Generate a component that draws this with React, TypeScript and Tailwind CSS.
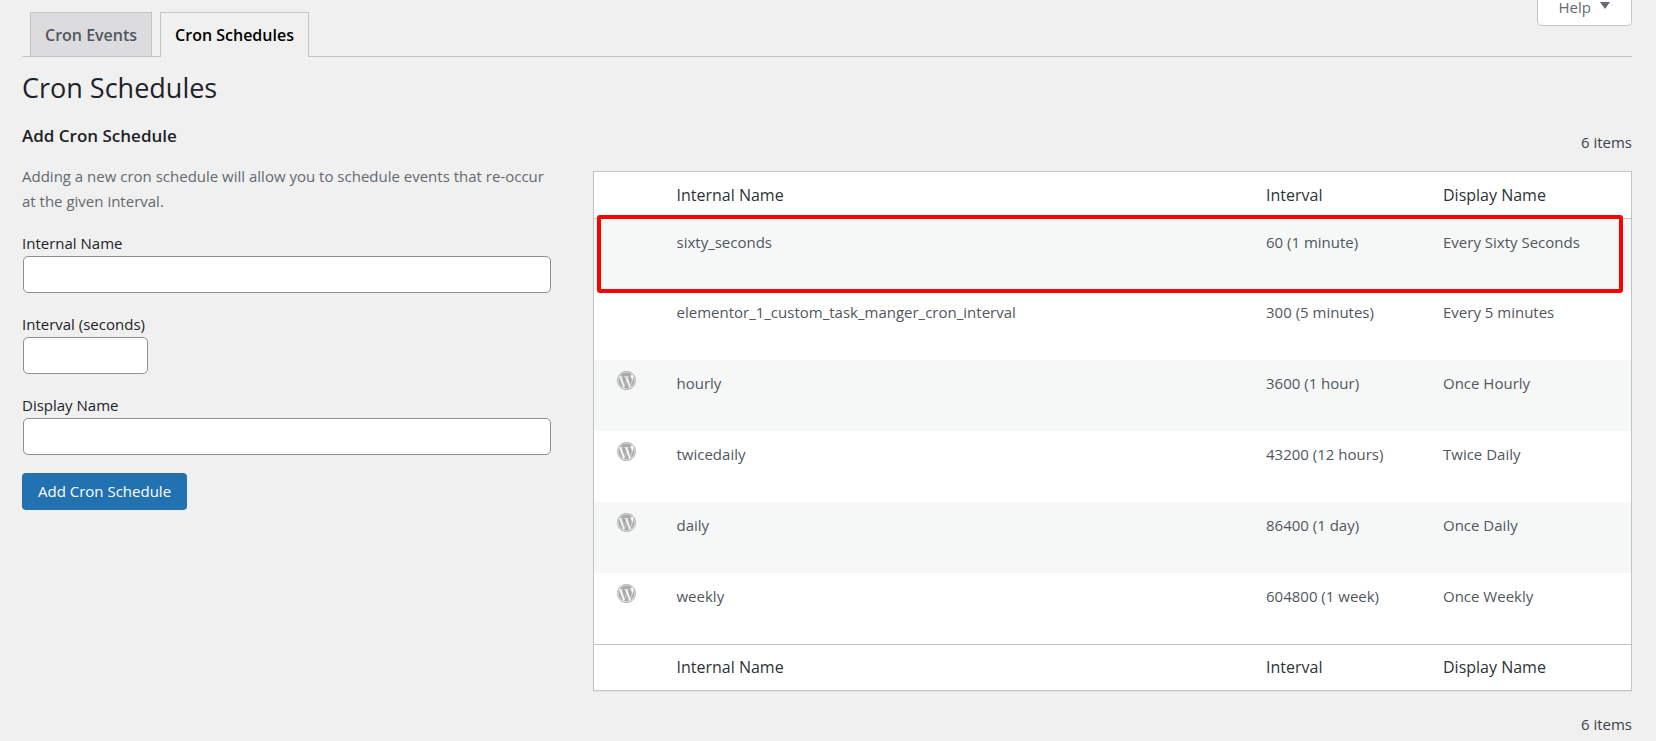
import { FaWordpress } from 'react-icons/fa'

const TABS = [
  { label: 'Cron Events', active: false },
  { label: 'Cron Schedules', active: true },
]

const SCHEDULES = [
  { name: 'sixty_seconds', interval: '60 (1 minute)', display: 'Every Sixty Seconds', core: false },
  { name: 'elementor_1_custom_task_manger_cron_interval', interval: '300 (5 minutes)', display: 'Every 5 minutes', core: false },
  { name: 'hourly', interval: '3600 (1 hour)', display: 'Once Hourly', core: true },
  { name: 'twicedaily', interval: '43200 (12 hours)', display: 'Twice Daily', core: true },
  { name: 'daily', interval: '86400 (1 day)', display: 'Once Daily', core: true },
  { name: 'weekly', interval: '604800 (1 week)', display: 'Once Weekly', core: true },
]

const FIELDS = [
  { id: 'internal-name', label: 'Internal Name', width: 'w-full' },
  { id: 'interval', label: 'Interval (seconds)', width: 'w-[125px]' },
  { id: 'display-name', label: 'Display Name', width: 'w-full' },
]

function HeadingCells() {
  return (
    <tr className="h-[46px] text-left text-base text-[#2c3338]">
      <td />
      <th scope="col" className="font-normal">Internal Name</th>
      <th scope="col" className="font-normal">Interval</th>
      <th scope="col" className="font-normal">Display Name</th>
    </tr>
  )
}

function ItemCount() {
  return <p className="text-right text-[15px] leading-6 text-[#3c434a]">{SCHEDULES.length} items</p>
}

export default function App() {
  return (
    <div className="min-h-screen bg-[#f0f0f0] pl-[22px] pr-6 font-['Open_Sans','Noto_Sans',sans-serif] text-[15px] text-[#1d2327]">

      {/* Tabs and help */}
      <header className="flex items-start justify-between border-b border-[#c3c4c7]">
        <nav className="flex gap-2 pl-2 pt-3">
          {TABS.map((tab) => (
            <a
              key={tab.label}
              href="#"
              className={
                tab.active
                  ? '-mb-px border border-b-0 border-[#c3c4c7] bg-[#f0f0f0] px-[14px] py-[10px] text-base font-semibold leading-6 text-black'
                  : 'border border-b-0 border-[#c3c4c7] bg-[#dcdcde] px-[14px] pb-[9px] pt-[10px] text-base font-semibold leading-6 text-[#50575e]'
              }
            >
              {tab.label}
            </a>
          ))}
        </nav>
        <button type="button" className="flex h-[26px] items-start gap-[9px] rounded-b-[5px] border border-t-0 border-[#c3c4c7] bg-white px-[21px] text-[15px] leading-[14px] text-[#646970]">
          Help
          <svg viewBox="0 0 10 7" className="mt-[2px] h-[7px] w-[10px]" fill="currentColor" aria-hidden="true">
            <path d="M0 0h10L5 7z" />
          </svg>
        </button>
      </header>

      <h1 className="pt-[11px] text-[27px] leading-10">Cron Schedules</h1>

      <div className="flex">

        {/* Add form */}
        <section className="w-[35%] shrink-0 pt-4">
          <h2 className="text-[17px] font-semibold leading-6">Add Cron Schedule</h2>
          <p className="pr-6 pt-4 leading-[25px] text-[#646970]">
            Adding a new cron schedule will allow you to schedule events that re-occur at the given interval.
          </p>
          <form className="pr-[35px] pt-[17px]">
            <div className="flex flex-col gap-[19px]">
              {FIELDS.map((field) => (
                <div key={field.id}>
                  <label htmlFor={field.id} className="block leading-[25px]">{field.label}</label>
                  <div className="pl-px">
                    <input
                      id={field.id}
                      type="text"
                      className={`block h-[37px] rounded-[5px] border border-[#8c8f94] bg-white px-2 ${field.width}`}
                    />
                  </div>
                </div>
              ))}
            </div>
            <button type="button" className="mt-[18px] h-[37px] rounded bg-[#2271b1] px-4 text-[15px] text-white">
              Add Cron Schedule
            </button>
          </form>
        </section>

        {/* Schedule list */}
        <section className="min-w-0 grow pl-[7px] pt-[22px]">
          <ItemCount />
          <div className="relative mt-[17px] border border-[#c3c4c7] bg-white shadow-[0_1px_1px_rgba(0,0,0,0.04)]">
            <table className="w-full table-fixed border-collapse">
              <colgroup>
                <col className="w-[83px]" />
                <col />
                <col className="w-[177px]" />
                <col className="w-[188px]" />
              </colgroup>
              <thead className="border-b border-[#c3c4c7]">
                <HeadingCells />
              </thead>
              <tbody>
                {SCHEDULES.map((s) => (
                  <tr key={s.name} className="h-[71px] align-top leading-6 text-[#50575e] odd:bg-[#f6f7f7]">
                    <td className="pl-[23px] pt-[11px]">
                      {s.core && <FaWordpress title="WordPress core schedule" className="size-[19px] stroke-[#aaaaaa] stroke-[10] text-[#aaaaaa]" />}
                    </td>
                    <td className="pt-[11px]">{s.name}</td>
                    <td className="pt-[11px]">{s.interval}</td>
                    <td className="pt-[11px]">{s.display}</td>
                  </tr>
                ))}
              </tbody>
              <tfoot className="border-t border-[#c3c4c7]">
                <HeadingCells />
              </tfoot>
            </table>

            {/* Marker over the first row */}
            <div className="pointer-events-none absolute left-[3px] right-2 top-[43px] h-[78px] rounded-[3px] border-4 border-[#ff0000]" />
          </div>
          <div className="pt-[21px]">
            <ItemCount />
          </div>
        </section>
      </div>
    </div>
  )
}
